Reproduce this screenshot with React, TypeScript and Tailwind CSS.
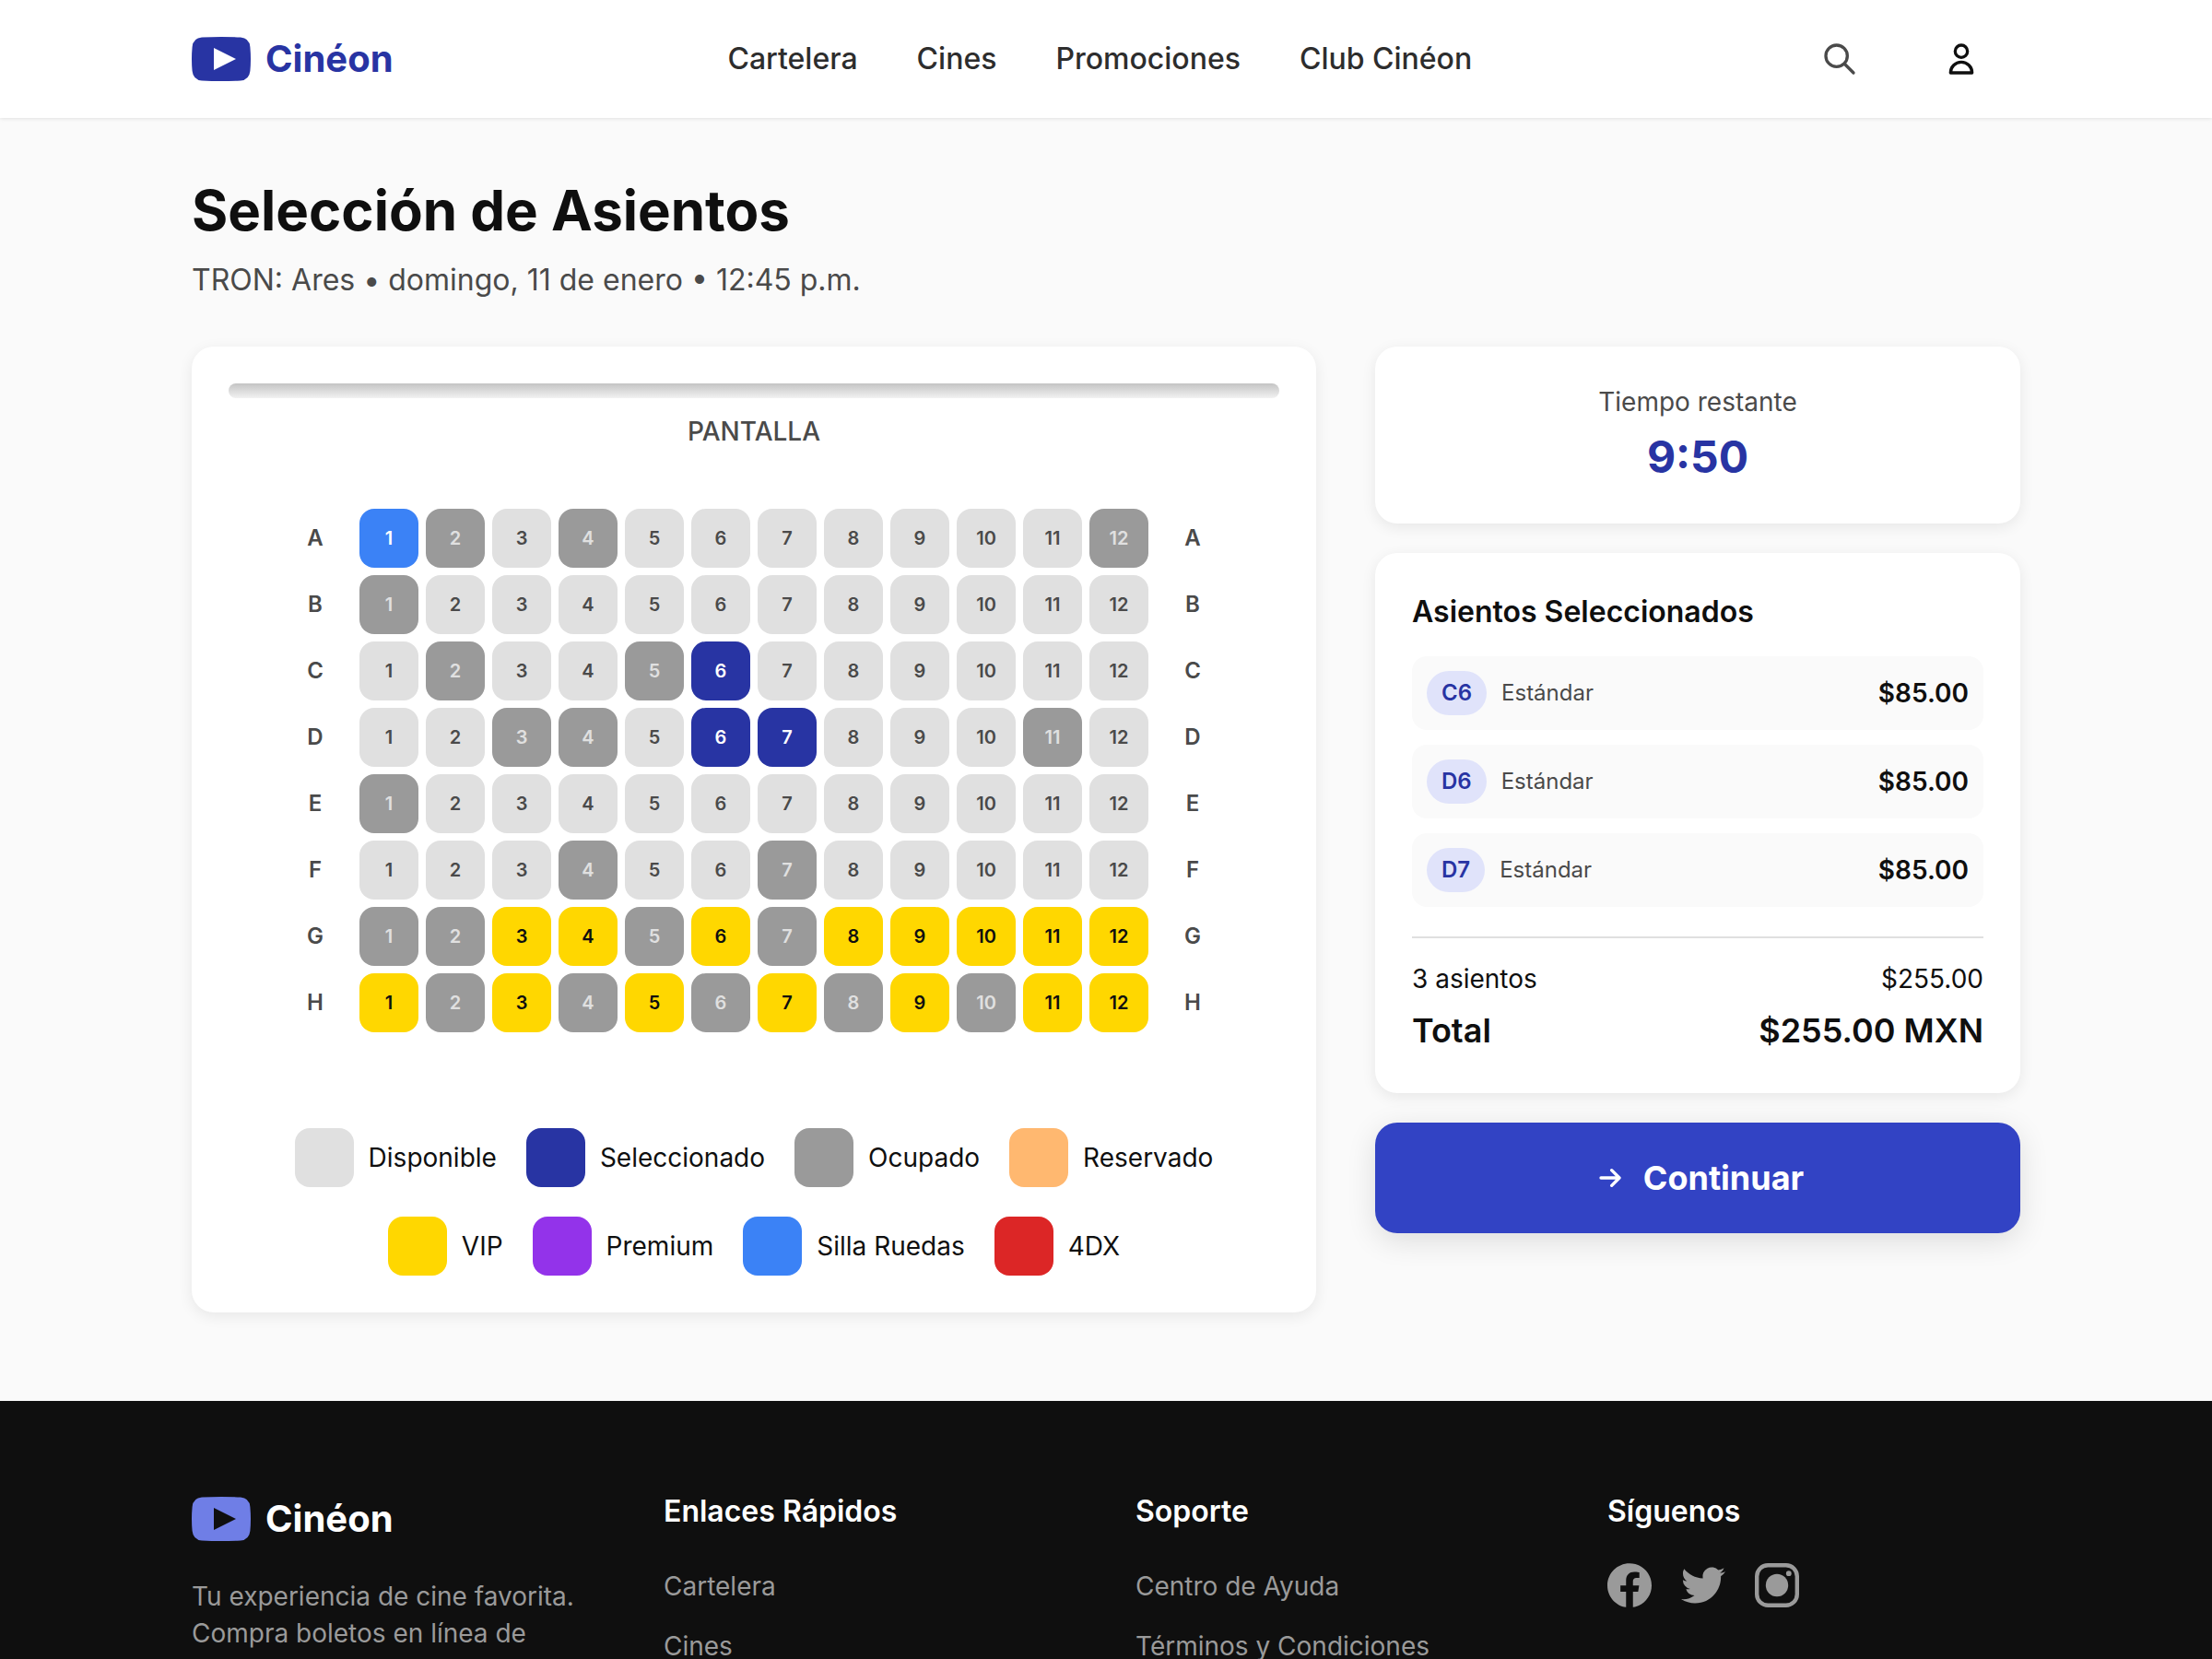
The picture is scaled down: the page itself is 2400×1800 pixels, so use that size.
import React, { useState } from "react";

const CARD = "rounded-3xl bg-white shadow-[0_4px_16px_rgba(0,0,0,0.08)]";

const STATUS = {
  ".": "bg-[#e0e0e0] text-[#4a4a4a]",
  x: "bg-[#9a9a9a] text-[#e0e0e0]",
  v: "bg-[#ffd700] text-[#0f0f0f]",
  w: "bg-[#3b82f6] text-white",
} as const;

const ROWS: [string, string][] = [
  ["A", "wx.x.......x"],
  ["B", "x..........."],
  ["C", ".x..x......."],
  ["D", "..xx......x."],
  ["E", "x..........."],
  ["F", "...x..x....."],
  ["G", "xxvvxvxvvvvv"],
  ["H", "vxvxvxvxvxvv"],
];

const LEGEND: [string, string][] = [
  ["Disponible", "bg-[#e0e0e0]"],
  ["Seleccionado", "bg-[#2834a3]"],
  ["Ocupado", "bg-[#9a9a9a]"],
  ["Reservado", "bg-[#ffb870]"],
  ["VIP", "bg-[#ffd700]"],
  ["Premium", "bg-[#9333ea]"],
  ["Silla Ruedas", "bg-[#3b82f6]"],
  ["4DX", "bg-[#dc2626]"],
];

function Logo({ tone, text }: { tone: string; text: string }) {
  return (
    <a href="#" className="flex items-center gap-4">
      <svg viewBox="0 0 32 24" className={`h-12 w-16 ${tone}`} fill="currentColor" aria-hidden="true">
        <path
          fillRule="evenodd"
          d="M5.5 .3Q16-.3 26.5 .3Q31.200 .6 31.700 5.500Q32.300 12 31.700 18.500Q31.200 23.400 26.500 23.700Q16 24.300 5.500 23.700Q.8 23.400 .3 18.500Q-.3 12 .3 5.500Q.8 .6 5.500 .3ZM12 6V18L24 12Z"
        />
      </svg>
      <span className={`text-[40px] leading-[64px] font-bold ${text}`}>Cinéon</span>
    </a>
  );
}

function StrokeIcon({ d }: { d: string }) {
  return (
    <svg viewBox="0 0 24 24" className="size-10" fill="none" stroke="currentColor" strokeWidth="2" strokeLinecap="round" strokeLinejoin="round" aria-hidden="true">
      <path d={d} />
    </svg>
  );
}

const SEARCH = "M21 21l-6-6m2-5a7 7 0 11-14 0 7 7 0 0114 0z";
const USER = "M16 7a4 4 0 11-8 0 4 4 0 018 0zM12 14a7 7 0 00-7 7h14a7 7 0 00-7-7z";
const ARROW = "M13 7l5 5m0 0l-5 5m5-5H6";

const FB =
  "M24 12.073c0-6.627-5.373-12-12-12s-12 5.373-12 12c0 5.990 4.388 10.954 10.125 11.854v-8.385H7.078v-3.470h3.047V9.430c0-3.007 1.792-4.669 4.533-4.669 1.312 0 2.686.235 2.686.235v2.953H15.830c-1.491 0-1.956.925-1.956 1.874v2.250h3.328l-.532 3.470h-2.796v8.385C19.612 23.027 24 18.062 24 12.073z";
const TW =
  "M23.953 4.570a10 10 0 01-2.825.775 4.958 4.958 0 002.163-2.723c-.951.555-2.005.959-3.127 1.184a4.920 4.920 0 00-8.384 4.482C7.690 8.095 4.067 6.130 1.640 3.162a4.822 4.822 0 00-.666 2.475c0 1.710.870 3.213 2.188 4.096a4.904 4.904 0 01-2.228-.616v.060a4.923 4.923 0 003.946 4.827 4.996 4.996 0 01-2.212.085 4.936 4.936 0 004.604 3.417 9.867 9.867 0 01-6.102 2.105c-.390 0-.779-.023-1.170-.067a13.995 13.995 0 007.557 2.209c9.053 0 13.998-7.496 13.998-13.985 0-.210 0-.420-.015-.630A9.935 9.935 0 0024 4.590z";

function Social({ label, children }: { label: string; children: React.ReactNode }) {
  return (
    <a href="#" aria-label={label}>
      <svg viewBox="0 0 24 24" className="size-12" fill="currentColor" aria-hidden="true">
        {children}
      </svg>
    </a>
  );
}

function FooterLinks({ title, links }: { title: string; links: string[] }) {
  return (
    <div>
      <h3 className="mb-8 text-[32px] leading-[48px] font-semibold text-white">{title}</h3>
      <ul className="flex flex-col gap-4">
        {links.map((l) => (
          <li key={l} className="text-[32px] leading-[48px]">
            <a href="#" className="text-[28px]">{l}</a>
          </li>
        ))}
      </ul>
    </div>
  );
}

export default function App() {
  const [selected, setSelected] = useState<string[]>(["C6", "D6", "D7"]);
  const toggle = (id: string) =>
    setSelected((s) => (s.includes(id) ? s.filter((x) => x !== id) : [...s, id].sort()));
  const total = `$${(selected.length * 85).toFixed(2)}`;

  return (
    <div className="min-h-screen bg-[#fafafa] font-['Inter',sans-serif] text-[#0f0f0f]">
      <header className="relative bg-white shadow-[0_1px_4px_rgba(0,0,0,0.1)]">
        <div className="mx-auto flex h-32 max-w-[2048px] items-center justify-between px-8">
          <Logo tone="text-[#2834a3]" text="text-[#2834a3]" />
          <nav className="flex gap-16 text-[32px] leading-[48px] font-medium text-[#2d2d2d]">
            {["Cartelera", "Cines", "Promociones", "Club Cinéon"].map((n) => (
              <a key={n} href="#">{n}</a>
            ))}
          </nav>
          <div className="flex items-center gap-8">
            <button type="button" aria-label="Buscar" className="p-4 text-[#4a4a4a]">
              <StrokeIcon d={SEARCH} />
            </button>
            <button type="button" aria-label="Mi cuenta" className="flex w-32 items-center justify-center">
              <StrokeIcon d={USER} />
            </button>
          </div>
        </div>
      </header>

      <main className="mx-auto max-w-[2048px] px-8 pt-16 pb-24">
        <h1 className="text-[60px] leading-[72px] font-bold">Selección de Asientos</h1>
        <p className="mt-4 text-[32px] leading-[48px] text-[#4a4a4a]">TRON: Ares • domingo, 11 de enero • 12:45 p.m.</p>

        <div className="mt-12 grid grid-cols-[1220fr_700fr] items-start gap-16">
          <section className={`${CARD} p-10`}>
            <div className="h-4 rounded-lg bg-linear-to-b from-[#c4c4c4] to-[#f2f2f2]" />
            <p className="mt-4 text-center text-[28px] leading-[40px] font-medium text-[#4a4a4a]">PANTALLA</p>
            <div className="mt-16 flex flex-col items-center gap-2">
              {ROWS.map(([row, seats]) => (
                <div key={row} className="flex items-center gap-8">
                  <span className="w-8 text-center text-2xl font-semibold text-[#4a4a4a]">{row}</span>
                  <div className="flex gap-2">
                    {seats.split("").map((s, i) => {
                      const id = `${row}${i + 1}`;
                      const on = selected.includes(id);
                      return (
                        <button
                          key={id}
                          type="button"
                          aria-label={`Asiento ${id}`}
                          aria-pressed={on}
                          disabled={s === "x"}
                          onClick={() => toggle(id)}
                          className={`size-16 rounded-2xl text-xl font-semibold ${on ? "bg-[#2834a3] text-white" : STATUS[s as keyof typeof STATUS]}`}
                        >
                          {i + 1}
                        </button>
                      );
                    })}
                  </div>
                  <span className="w-8 text-center text-2xl font-semibold text-[#4a4a4a]">{row}</span>
                </div>
              ))}
            </div>
            <ul className="mt-[104px] flex flex-wrap justify-center gap-8 px-8">
              {LEGEND.map(([name, tone]) => (
                <li key={name} className="flex items-center gap-4 text-[28px] leading-[40px]">
                  <span className={`size-16 rounded-2xl ${tone}`} />
                  {name}
                </li>
              ))}
            </ul>
          </section>

          <aside className="flex flex-col gap-8">
            <section className={`${CARD} p-10 text-center`}>
              <p className="text-[28px] leading-[40px] text-[#4a4a4a]">Tiempo restante</p>
              <p className="mt-2 text-[48px] leading-[64px] font-bold text-[#2834a3]">9:50</p>
            </section>

            <section className={`${CARD} p-10`}>
              <h2 className="text-[32px] leading-[48px] font-semibold">Asientos Seleccionados</h2>
              <ul className="mt-6 flex flex-col gap-4">
                {selected.map((id) => (
                  <li key={id} className="flex h-20 items-center gap-4 rounded-2xl bg-[#fafafa] px-4">
                    <span className="rounded-full bg-[#e0e3fa] px-4 py-2 text-2xl font-semibold text-[#2834a3]">{id}</span>
                    <span className="text-2xl text-[#4a4a4a]">Estándar</span>
                    <span className="ml-auto text-[28px] leading-[40px] font-semibold">$85.00</span>
                  </li>
                ))}
              </ul>
              <div className="mt-8 border-t-2 border-[#e0e0e0] pt-6">
                <div className="flex justify-between text-[28px] leading-[40px]">
                  <span>{selected.length} asientos</span>
                  <span>{total}</span>
                </div>
                <div className="mt-2 flex justify-between text-[36px] leading-[56px] font-semibold">
                  <span>Total</span>
                  <span>{total} MXN</span>
                </div>
              </div>
            </section>

            <button
              type="button"
              className="flex h-[120px] items-center justify-center gap-4 rounded-3xl bg-[#3243c4] text-[36px] font-bold text-white shadow-[0_8px_32px_rgba(0,0,0,0.12)]"
            >
              <StrokeIcon d={ARROW} />
              Continuar
            </button>
          </aside>
        </div>
      </main>

      <footer className="bg-[#0f0f0f] text-[28px] text-[#9a9a9a]">
        <div className="mx-auto grid max-w-[2048px] grid-cols-4 gap-16 px-8 py-24">
          <div>
            <Logo tone="text-[#6f7ee6]" text="text-white" />
            <p className="mt-8 leading-[40px]">Tu experiencia de cine favorita. Compra boletos en línea de</p>
          </div>
          <FooterLinks title="Enlaces Rápidos" links={["Cartelera", "Cines"]} />
          <FooterLinks title="Soporte" links={["Centro de Ayuda", "Términos y Condiciones"]} />
          <div>
            <h3 className="mb-8 text-[32px] leading-[48px] font-semibold text-white">Síguenos</h3>
            <div className="flex gap-8">
              <Social label="Facebook"><path d={FB} /></Social>
              <Social label="Twitter"><path d={TW} /></Social>
              <Social label="Instagram">
                <rect x="1.100" y="1.100" width="21.800" height="21.800" rx="6" fill="none" stroke="currentColor" strokeWidth="2.200" />
                <circle cx="12" cy="12" r="6.100" />
                <circle cx="18.400" cy="5.600" r="1.440" />
              </Social>
            </div>
          </div>
        </div>
      </footer>
    </div>
  );
}
